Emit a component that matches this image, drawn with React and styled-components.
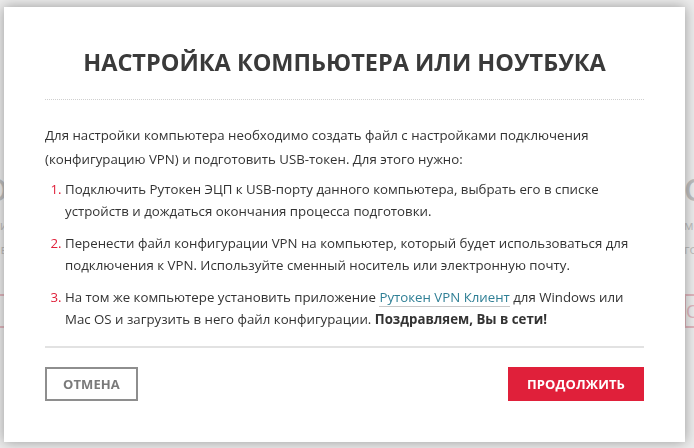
import styled, { createGlobalStyle } from 'styled-components';

const Global = createGlobalStyle`
  html, body {
    margin: 0;
    padding: 0;
    width: 694px;
    height: 448px;
    overflow: hidden;
    background: #ececec;
    font-family: 'Open Sans', 'Noto Sans', sans-serif;
  }
`;

const Page = styled.div`
  width: 694px;
  height: 448px;
  display: flex;
  justify-content: space-between;
  box-sizing: border-box;
  padding: 170px 0 0 0;
  color: #9a9a9a;
  opacity: 0.55;
  overflow: hidden;
`;

const BackColumn = styled.div`
  width: 120px;
  display: flex;
  flex-direction: column;
  align-items: ${(p) => (p.$right ? 'flex-start' : 'flex-end')};
  margin: ${(p) => (p.$right ? '0 -110px 0 0' : '0 0 0 -112px')};
  gap: 6px;
  font-size: 13px;
`;

const BackBig = styled.div`
  font-size: 30px;
  font-weight: 600;
  line-height: 40px;
`;

const BackRule = styled.div`
  width: 120px;
  height: 30px;
  border: 2px solid #d68a98;
  margin-top: 30px;
  color: #d68a98;
  font-size: 18px;
  line-height: 30px;
`;

const Overlay = styled.div`
  position: fixed;
  inset: 0;
`;

const Modal = styled.div`
  position: absolute;
  left: 4px;
  top: 7px;
  width: 681px;
  height: 435px;
  background: #fff;
  box-shadow: 0 0 12px rgba(0, 0, 0, 0.35);
  box-sizing: border-box;
  padding: 0 41px;
  display: flex;
  flex-direction: column;
`;

const Title = styled.h1`
  margin: 0;
  padding: 39px 0 21px;
  text-align: center;
  font-size: 23.5px;
  font-weight: 700;
  line-height: 32px;
  color: #3a3a3a;
  border-bottom: 1px dotted #cfcfcf;
`;

const Body = styled.div`
  padding: 23px 0 16px;
  font-size: 13.25px;
  color: #333;
  border-bottom: 2px solid #e2e2e2;
`;

const Intro = styled.p`
  margin: 0 0 7px;
  line-height: 24px;
`;

const Steps = styled.ol`
  margin: 0;
  padding: 0 0 0 20px;
  line-height: 22px;
`;

const Step = styled.li`
  margin: 0 0 10px;
  padding-left: 0;
  &::marker {
    color: #e0203a;
  }
  &:last-child {
    margin-bottom: 0;
  }
`;

const Link = styled.a`
  color: #2f7f95;
  text-decoration: none;
  border-bottom: 1px solid #c8c8c8;
`;

const Footer = styled.div`
  display: flex;
  justify-content: space-between;
  align-items: center;
  padding-top: 19px;
`;

const Button = styled.button`
  height: 34px;
  box-sizing: border-box;
  padding: 0 ${(p) => (p.$primary ? '17px' : '16px')};
  font-family: 'Open Sans', sans-serif;
  font-size: 13px;
  font-weight: 700;
  letter-spacing: 0.1px;
  cursor: pointer;
  background: ${(p) => (p.$primary ? '#e0203a' : '#fff')};
  color: ${(p) => (p.$primary ? '#fff' : '#7a7a7a')};
  border: 2px solid ${(p) => (p.$primary ? '#e0203a' : '#8e8e8e')};
  min-width: ${(p) => (p.$primary ? '134px' : '92px')};
`;

export default function App() {
  return (
    <>
      <Global />
      <Page>
        <BackColumn>
          <BackBig>О</BackBig>
          <div>и</div>
          <div>в</div>
          <BackRule>Д</BackRule>
        </BackColumn>
        <BackColumn $right>
          <BackBig>О</BackBig>
          <div>мо</div>
          <div>го</div>
          <BackRule>О</BackRule>
        </BackColumn>
      </Page>
      <Overlay>
        <Modal>
          <Title>НАСТРОЙКА КОМПЬЮТЕРА ИЛИ НОУТБУКА</Title>
          <Body>
            <Intro>
              Для настройки компьютера необходимо создать файл с настройками подключения
              (конфигурацию VPN) и подготовить USB-токен. Для этого нужно:
            </Intro>
            <Steps>
              <Step>
                Подключить Рутокен ЭЦП к USB-порту данного компьютера, выбрать его в списке
                устройств и дождаться окончания процесса подготовки.
              </Step>
              <Step>
                Перенести файл конфигурации VPN на компьютер, который будет использоваться для
                подключения к VPN. Используйте сменный носитель или электронную почту.
              </Step>
              <Step>
                На том же компьютере установить приложение <Link href="#">Рутокен VPN Клиент</Link> для
                Windows или Mac OS и загрузить в него файл конфигурации.{' '}
                <b>Поздравляем, Вы в сети!</b>
              </Step>
            </Steps>
          </Body>
          <Footer>
            <Button>ОТМЕНА</Button>
            <Button $primary>ПРОДОЛЖИТЬ</Button>
          </Footer>
        </Modal>
      </Overlay>
    </>
  );
}
